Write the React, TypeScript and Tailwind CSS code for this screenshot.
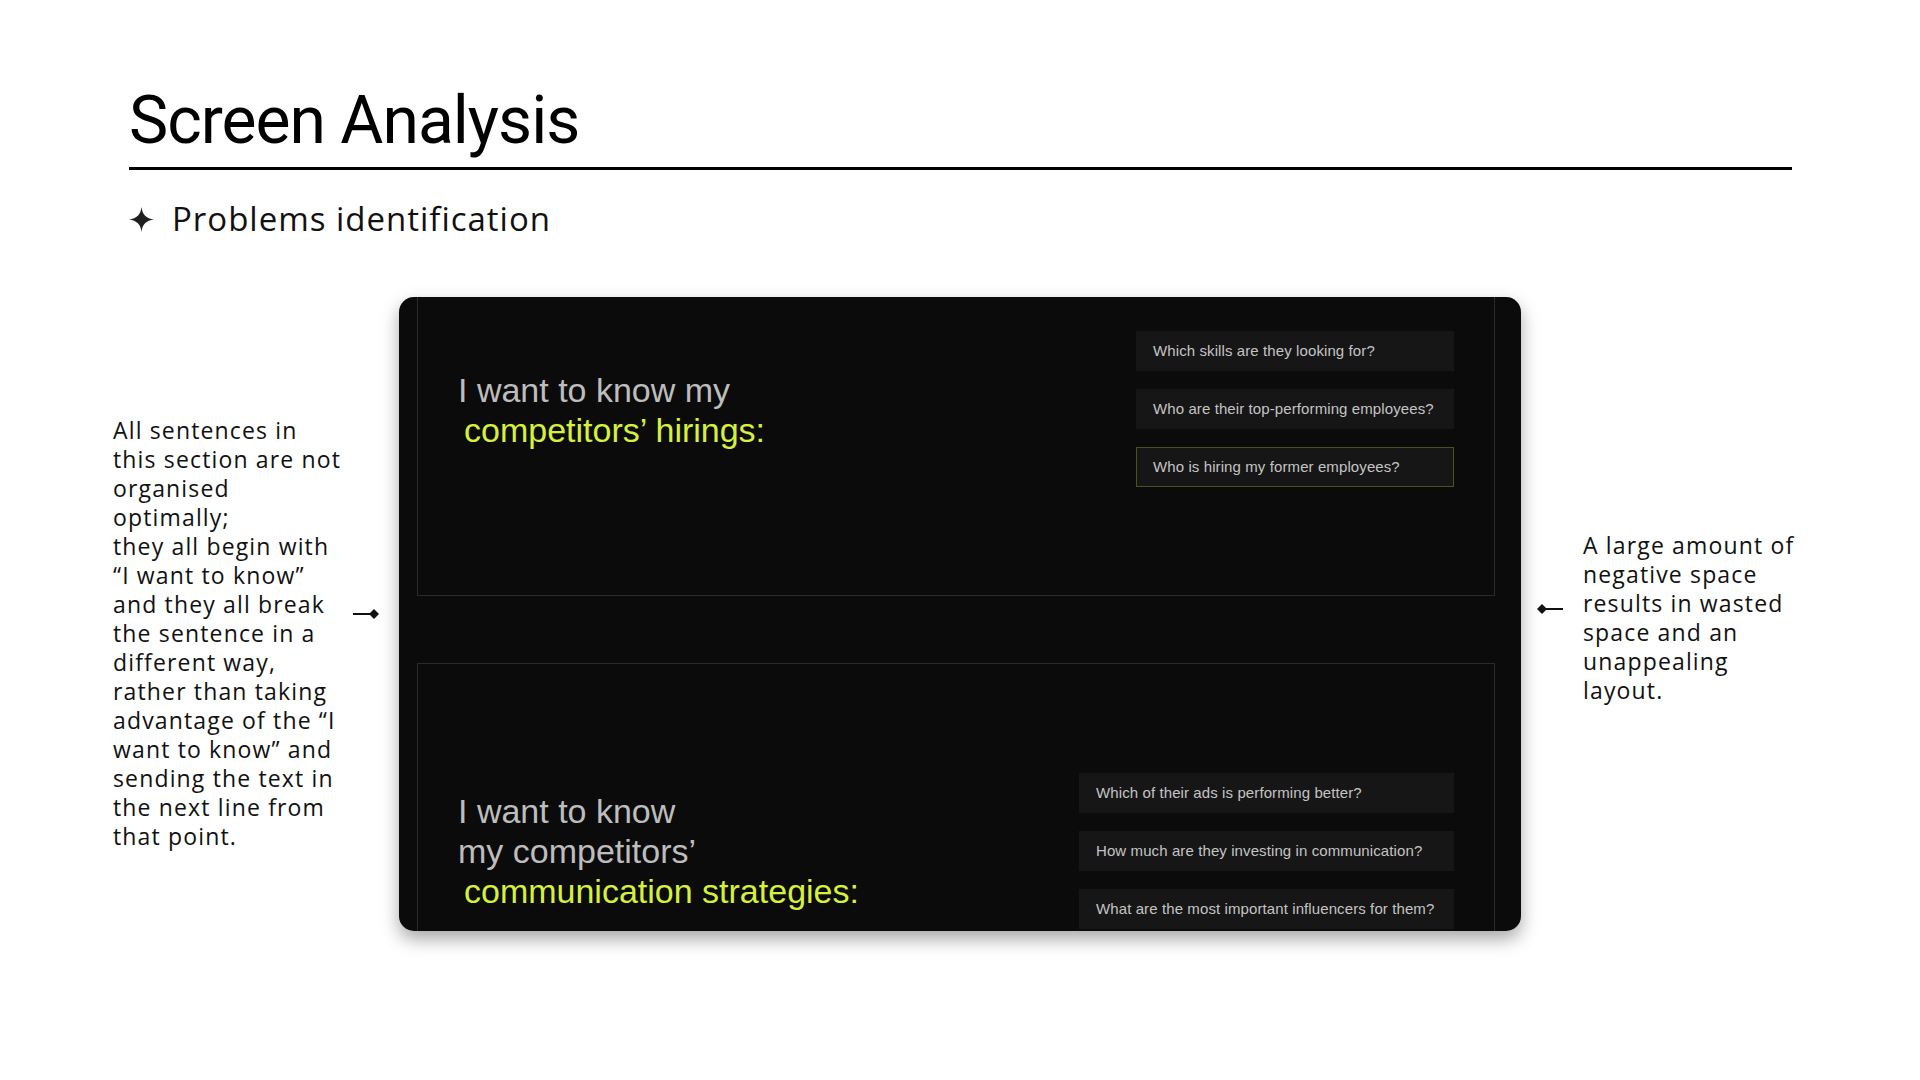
import React from "react";

const Star = () => (
  <svg width="25" height="25" viewBox="0 0 24 24" className="shrink-0">
    <path
      d="M12 0 C12.7 7 16.5 11.1 24 12 C16.5 12.9 12.7 17 12 24 C11.3 17 7.5 12.9 0 12 C7.5 11.1 11.3 7 12 0 Z"
      fill="#1f1f1f"
    />
  </svg>
);

const ArrowRight = () => (
  <svg width="27" height="12" viewBox="0 0 27 12">
    <line x1="0" y1="6" x2="20" y2="6" stroke="#111" strokeWidth="2" />
    <path d="M21 1 L26 6 L21 11 L16 6 Z" fill="#111" />
  </svg>
);

const ArrowLeft = () => (
  <svg width="27" height="12" viewBox="0 0 27 12">
    <line x1="7" y1="6" x2="27" y2="6" stroke="#111" strokeWidth="2" />
    <path d="M6 1 L11 6 L6 11 L1 6 Z" fill="#111" />
  </svg>
);

const Question = ({ text, active }: { text: string; active?: boolean }) => (
  <div
    className={
      "h-[40px] flex items-center bg-[#161616] text-[15px] tracking-[0.1px] text-[#c4c4c4] " +
      (active ? "border border-[#4f5020] pl-[16px]" : "pl-[17px]")
    }
    style={{ fontFamily: '"Liberation Sans", Arial, sans-serif' }}
  >
    {text}
  </div>
);

export default function App() {
  const annLeft = [
    "All sentences in",
    "this section are not",
    "organised",
    "optimally;",
    "they all begin with",
    "\u201cI want to know\u201d",
    "and they all break",
    "the sentence in a",
    "different way,",
    "rather than taking",
    "advantage of the \u201cI",
    "want to know\u201d and",
    "sending the text in",
    "the next line from",
    "that point.",
  ];
  const annRight = [
    "A large amount of",
    "negative space",
    "results in wasted",
    "space and an",
    "unappealing",
    "layout.",
  ];
  const ann = { fontFamily: '"Open Sans", sans-serif' };
  const big = { fontFamily: '"Liberation Sans", Arial, sans-serif' };

  return (
    <div className="w-[1920px] h-[1080px] bg-white overflow-hidden flex flex-col">
      {/* Header */}
      <div
        className="pt-[87px] pl-[129px] text-[66px] leading-[68px] tracking-[-0.015em] text-black"
        style={{ fontFamily: "Roboto, sans-serif" }}
      >
        Screen Analysis
      </div>
      <div className="ml-[129px] mt-[12px] w-[1663px] h-[3px] bg-black" />
      <div className="ml-[129px] mt-[29px] flex items-center gap-[18px] h-[40px]">
        <Star />
        <span
          className="text-[33px] leading-[40px] font-medium text-[#111] tracking-[0.03em]"
          style={ann}
        >
          Problems identification
        </span>
      </div>

      {/* Main row */}
      <div className="mt-[58px] flex items-start">
        <div
          className="ml-[113px] mt-[119px] w-[240px] text-[23px] leading-[29px] font-medium text-[#111] tracking-[0.05em]"
          style={ann}
        >
          {annLeft.map((l, i) => (
            <div key={i} className="whitespace-nowrap">
              {l}
            </div>
          ))}
        </div>
        <div className="mt-[311px] w-[27px] flex">
          <ArrowRight />
        </div>
        <div className="ml-[19px] w-[1122px] h-[634px] rounded-[15px] bg-[#0b0b0b] overflow-hidden shadow-[0_8px_18px_rgba(0,0,0,0.35)] flex flex-col pl-[18px] pr-[26px]">
          {/* upper card */}
          <div className="h-[299px] shrink-0 border-x border-b border-[#2a2a2a] flex justify-between pl-[40px] pr-[40px]">
            <div className="mt-[73px] text-[34px] leading-[40px]" style={big}>
              <div className="text-[#bdbdbd]">I want to know my</div>
              <div className="text-[#d6f03c] pl-[6px]">competitors’ hirings:</div>
            </div>
            <div className="mt-[34px] w-[318px] flex flex-col gap-[18px]">
              <Question text="Which skills are they looking for?" />
              <Question text="Who are their top-performing employees?" />
              <Question text="Who is hiring my former employees?" active />
            </div>
          </div>
          {/* lower card */}
          <div className="mt-[67px] flex-1 border-x border-t border-[#2a2a2a] flex justify-between pl-[40px] pr-[40px]">
            <div className="mt-[127px] text-[34px] leading-[40px]" style={big}>
              <div className="text-[#bdbdbd]">I want to know</div>
              <div className="text-[#bdbdbd]">my competitors’</div>
              <div className="text-[#d6f03c] pl-[6px]">communication strategies:</div>
            </div>
            <div className="mt-[109px] w-[375px] flex flex-col gap-[18px] shrink-0">
              <Question text="Which of their ads is performing better?" />
              <Question text="How much are they investing in communication?" />
              <Question text="What are the most important influencers for them?" />
            </div>
          </div>
        </div>
        <div className="ml-[15px] mt-[306px] w-[27px] flex">
          <ArrowLeft />
        </div>
        <div
          className="ml-[20px] mt-[234px] text-[23px] leading-[29px] font-medium text-[#111] tracking-[0.05em]"
          style={ann}
        >
          {annRight.map((l, i) => (
            <div key={i} className="whitespace-nowrap">
              {l}
            </div>
          ))}
        </div>
      </div>
    </div>
  );
}
